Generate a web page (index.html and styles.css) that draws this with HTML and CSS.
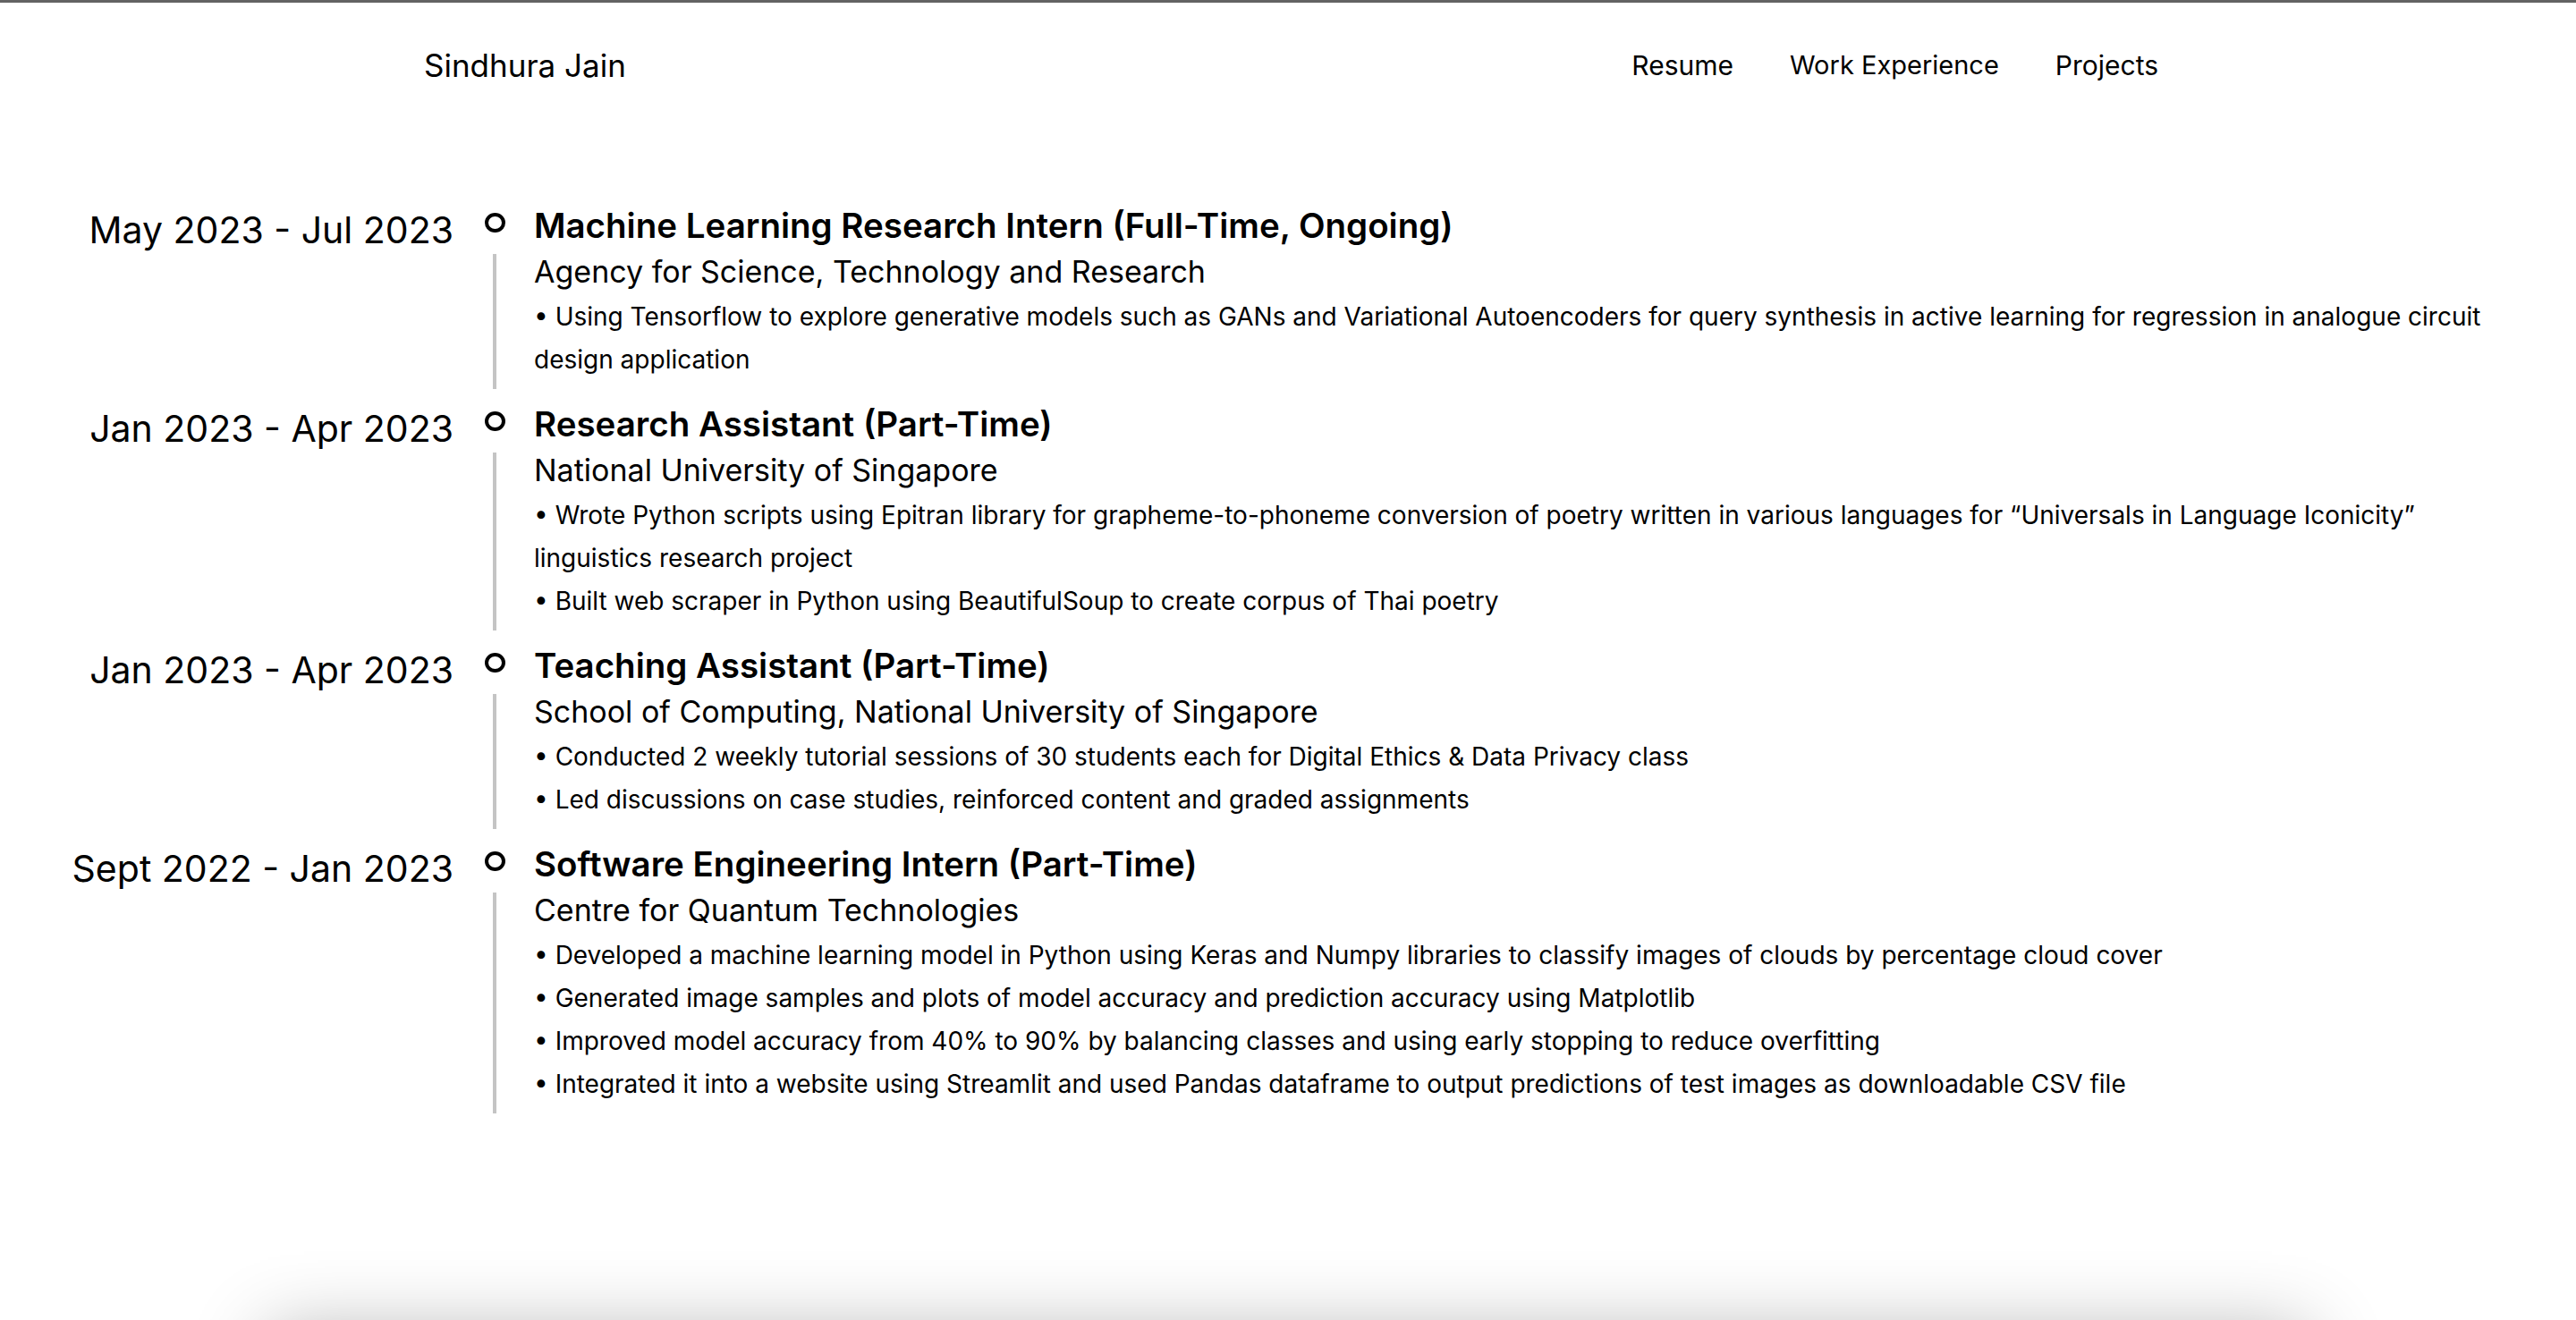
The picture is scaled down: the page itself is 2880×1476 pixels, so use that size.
FILE: index.html
```html
<!DOCTYPE html>
<html lang="en">
<head>
<meta charset="utf-8">
<title>Sindhura Jain - Work Experience</title>
<link rel="stylesheet" href="styles.css">
</head>
<body>
<div class="topbar"></div>
<header class="header">
  <div class="name">Sindhura Jain</div>
  <nav class="nav">
    <a class="nav-link">Resume</a>
    <a class="nav-link">Work Experience</a>
    <a class="nav-link">Projects</a>
  </nav>
</header>
<main class="timeline">
  <section class="entry">
    <div class="date">May 2023 - Jul 2023</div>
    <div class="marker"><span class="dot"></span><span class="line"></span></div>
    <div class="content">
      <h2 class="role">Machine Learning Research Intern (Full-Time, Ongoing)</h2>
      <div class="org">Agency for Science, Technology and Research</div>
      <p class="point">• Using Tensorflow to explore generative models such as GANs and Variational Autoencoders for query synthesis in active learning for regression in analogue circuit design application</p>
    </div>
  </section>
  <section class="entry">
    <div class="date">Jan 2023 - Apr 2023</div>
    <div class="marker"><span class="dot"></span><span class="line"></span></div>
    <div class="content">
      <h2 class="role">Research Assistant (Part-Time)</h2>
      <div class="org">National University of Singapore</div>
      <p class="point">• Wrote Python scripts using Epitran library for grapheme-to-phoneme conversion of poetry written in various languages for “Universals in Language Iconicity” linguistics research project</p>
      <p class="point">• Built web scraper in Python using BeautifulSoup to create corpus of Thai poetry</p>
    </div>
  </section>
  <section class="entry">
    <div class="date">Jan 2023 - Apr 2023</div>
    <div class="marker"><span class="dot"></span><span class="line"></span></div>
    <div class="content">
      <h2 class="role">Teaching Assistant (Part-Time)</h2>
      <div class="org">School of Computing, National University of Singapore</div>
      <p class="point">• Conducted 2 weekly tutorial sessions of 30 students each for Digital Ethics &amp; Data Privacy class</p>
      <p class="point">• Led discussions on case studies, reinforced content and graded assignments</p>
    </div>
  </section>
  <section class="entry">
    <div class="date">Sept 2022 - Jan 2023</div>
    <div class="marker"><span class="dot"></span><span class="line"></span></div>
    <div class="content">
      <h2 class="role">Software Engineering Intern (Part-Time)</h2>
      <div class="org">Centre for Quantum Technologies</div>
      <p class="point">• Developed a machine learning model in Python using Keras and Numpy libraries to classify images of clouds by percentage cloud cover</p>
      <p class="point">• Generated image samples and plots of model accuracy and prediction accuracy using Matplotlib</p>
      <p class="point">• Improved model accuracy from 40% to 90% by balancing classes and using early stopping to reduce overfitting</p>
      <p class="point">• Integrated it into a website using Streamlit and used Pandas dataframe to output predictions of test images as downloadable CSV file</p>
    </div>
  </section>
</main>
<div class="next-section"></div>
</body>
</html>
```
FILE: styles.css
```css
* { box-sizing: border-box; }
html, body { margin: 0; padding: 0; background: #ffffff; overflow: hidden; }
body {
  font-family: Inter, "Open Sans", "Liberation Sans", sans-serif;
  color: #000000;
  height: 1476px;
}
.topbar { height: 3px; background: #636363; }
.header {
  height: 140px;
  display: flex;
  align-items: center;
  justify-content: space-between;
  padding: 0 467px 0 474px;
}
.name { font-size: 35px; font-weight: 400; }
.nav { display: flex; gap: 63px; }
.nav-link { font-size: 30px; font-weight: 400; color: #000; text-decoration: none; }
.nav-link:nth-child(2) { font-size: 29px; }
.timeline {
  padding: 85px 80px 0 47px;
  display: flex;
  flex-direction: column;
  gap: 15px;
}
.entry { display: flex; align-items: stretch; }
.date {
  width: 460px;
  flex: none;
  text-align: right;
  font-size: 41px;
  line-height: 48px;
  padding-top: 5px;
  white-space: nowrap;
}
.marker {
  width: 22px;
  flex: none;
  margin-left: 35px;
  margin-right: 33px;
  display: flex;
  flex-direction: column;
  align-items: center;
}
.dot {
  width: 23px;
  height: 22px;
  margin-top: 10px;
  border: 4px solid #000;
  border-radius: 50%;
  flex: none;
}
.line {
  flex: 1;
  width: 4px;
  margin-top: 24px;
  background: #c4c4c4;
}
.content { flex: 1; padding-bottom: 9px; }
.role { margin: 0; font-size: 38.5px; font-weight: 600; line-height: 48px; }
.org { font-size: 34px; line-height: 48px; padding-top: 4px; margin-bottom: 2px; }
.point { margin: 0; font-size: 28px; line-height: 48px; }
.next-section {
  position: absolute;
  left: 300px;
  right: 300px;
  top: 1490px;
  height: 400px;
  background: #fff;
  box-shadow: 0 0 80px rgba(0,0,0,0.3);
}
```
